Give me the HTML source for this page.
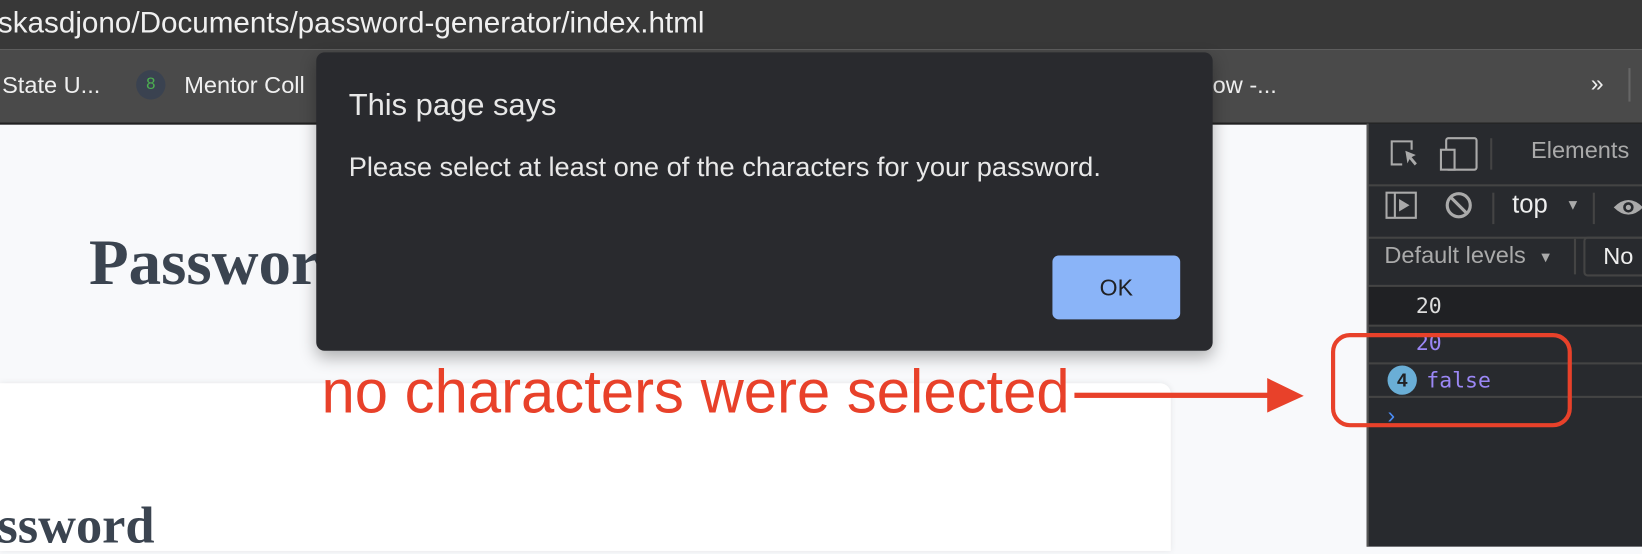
<!DOCTYPE html><html><head><style>
body{margin:0;width:1642px;height:522px;overflow:hidden;position:relative;font-family:"Liberation Sans",sans-serif;background:#f8f9fb}
#w{position:absolute;left:0;top:0;width:1568px;height:500px;transform:scale(1.0472);transform-origin:0 0}
.a{position:absolute;line-height:1}
</style></head><body><div id="w">
<div class="a" style="left:0;top:0;width:1568px;height:47px;background:#383838;color:#f0f0f0;font-size:28.3px;"><span class="a" style="left:-2px;top:7px">skasdjono/Documents/password-generator/index.html</span></div>
<div class="a" style="left:0;top:47px;width:1568px;height:70px;background:#4a4a4a;border-bottom:2px solid #222;color:#f0f0f0;font-size:22.5px;">
<span class="a" style="left:2px;top:24px">State U...</span>
<span class="a" style="left:130px;top:20px;width:28px;height:28px;border-radius:50%;background:#3a4250;color:#4caf50;font-size:16px;text-align:center;line-height:28px">8</span>
<span class="a" style="left:176px;top:24px">Mentor Coll</span>
<span class="a" style="left:1158px;top:24px">ow -...</span>
<span class="a" style="left:1519px;top:22px;font-size:22px">»</span>
<span class="a" style="left:1555px;top:18px;width:2px;height:32px;background:#666"></span>
</div>
<div class="a" style="left:85px;top:220px;font-family:'Liberation Serif',serif;font-weight:bold;font-size:62px;color:#3b4450">Password</div>
<div class="a" style="left:0;top:366px;width:1118px;height:160px;background:#fff;border-radius:0 10px 0 0;box-shadow:0 0 6px rgba(0,0,0,.08)"></div>
<div class="a" style="left:-58px;top:476px;font-family:'Liberation Serif',serif;font-weight:bold;font-size:50px;color:#3b4450">Password</div>
<div class="a" style="left:302px;top:50px;width:856px;height:285px;background:#292a2e;border-radius:8px;box-shadow:0 6px 16px rgba(0,0,0,.3);color:#e8e8e8">
<div class="a" style="left:31px;top:36px;font-size:29.5px">This page says</div>
<div class="a" style="left:31px;top:96px;font-size:26px">Please select at least one of the characters for your password.</div>
<div class="a" style="left:703px;top:194px;width:122px;height:61px;background:#8ab4f8;border-radius:6px;color:#202124;font-size:22px;text-align:center;line-height:61px">OK</div>
</div>
<div class="a" style="left:1305px;top:118px;width:337px;height:404px;background:#282a2e;border-left:2px solid #555;color:#ddd">
<div class="a" style="left:0;top:0;width:337px;height:58px;border-bottom:2px solid #444"></div>
<svg class="a" style="left:18px;top:12px" width="90" height="34"><path d="M14 27H4V5H23V13" fill="none" stroke="#aaa" stroke-width="2"/><path d="M17 14l10 4-4 2 5 6-2 2-5-6-2 4z" fill="#aaa"/><rect x="56" y="2" width="29" height="30" rx="2" fill="none" stroke="#aaa" stroke-width="2"/><rect x="51" y="13" width="13" height="19" fill="#282a2e" stroke="#aaa" stroke-width="2"/></svg>
<span class="a" style="left:116px;top:14px;width:2px;height:30px;background:#444"></span>
<span class="a" style="left:155px;top:15px;font-size:22.5px;color:#aaa">Elements</span>
<div class="a" style="left:0;top:60px;width:337px;height:48px;border-bottom:2px solid #444"></div>
<svg class="a" style="left:16px;top:64px" width="32" height="30"><rect x="1" y="2" width="28" height="24" fill="none" stroke="#aaa" stroke-width="2"/><path d="M9 2v24" stroke="#aaa" stroke-width="2"/><path d="M13 8l10 6-10 6z" fill="#aaa"/></svg>
<svg class="a" style="left:72px;top:64px" width="30" height="30"><circle cx="14" cy="14" r="11" fill="none" stroke="#aaa" stroke-width="3"/><path d="M6 6l16 16" stroke="#aaa" stroke-width="3"/></svg>
<span class="a" style="left:118px;top:66px;width:2px;height:30px;background:#444"></span>
<span class="a" style="left:137px;top:66px;font-size:24.5px;color:#eee">top</span>
<span class="a" style="left:188px;top:70px;font-size:14px;color:#aaa">▼</span>
<span class="a" style="left:214px;top:66px;width:2px;height:30px;background:#444"></span>
<svg class="a" style="left:232px;top:68px" width="40" height="24"><path d="M2 12Q16 -2 30 12Q16 26 2 12z" fill="#aaa"/><circle cx="16" cy="12" r="5" fill="#282a2e"/><circle cx="16" cy="12" r="2.5" fill="#aaa"/></svg>
<div class="a" style="left:0;top:110px;width:337px;height:44px;border-bottom:2px solid #444"></div>
<span class="a" style="left:15px;top:115px;font-size:22.5px;color:#aaa">Default levels</span>
<span class="a" style="left:162px;top:120px;font-size:14px;color:#aaa">▼</span>
<span class="a" style="left:196px;top:110px;width:2px;height:34px;background:#444"></span>
<div class="a" style="left:205px;top:108px;width:140px;height:34px;border:2px solid #444;border-radius:4px"><span style="position:absolute;left:17px;top:6px;font-size:22.5px;color:#eee;line-height:1">No</span></div>
<div class="a" style="left:0;top:156px;width:337px;height:36px;background:#202124;border-bottom:2px solid #444;font-family:'DejaVu Sans Mono',monospace;font-size:20.5px;color:#ddd"><span style="position:absolute;left:45px;top:8px">20</span></div>
<div class="a" style="left:0;top:194px;width:337px;height:34px;border-bottom:2px solid #444;font-family:'DejaVu Sans Mono',monospace;font-size:20.5px;color:#9b87f5"><span style="position:absolute;left:45px;top:5px">20</span></div>
<div class="a" style="left:0;top:230px;width:337px;height:30px;border-bottom:2px solid #444;font-family:'DejaVu Sans Mono',monospace;font-size:20.5px;color:#9b87f5"><span style="position:absolute;left:18px;top:1px;width:28px;height:28px;border-radius:50%;background:#6aaed6;color:#202124;font-weight:bold;text-align:center;line-height:28px;font-family:'Liberation Sans';font-size:18px">4</span><span style="position:absolute;left:55px;top:5px">false</span></div>
<span class="a" style="left:18px;top:268px;color:#4b8cf5;font-size:22px">›</span>
</div>
<div class="a" style="left:1271px;top:318px;width:222px;height:82px;border:4px solid #e8412a;border-radius:18px"></div>
<div class="a" style="left:307px;top:346px;font-size:58px;color:#e8412a;transform:scaleX(0.985);transform-origin:0 0">no characters were selected</div>
<div class="a" style="left:1026px;top:375px;width:188px;height:5px;background:#e8412a"></div>
<svg class="a" style="left:1210px;top:361px" width="36" height="34"><path d="M0 0L35 17 0 33z" fill="#e8412a"/></svg>
</div></body></html>
